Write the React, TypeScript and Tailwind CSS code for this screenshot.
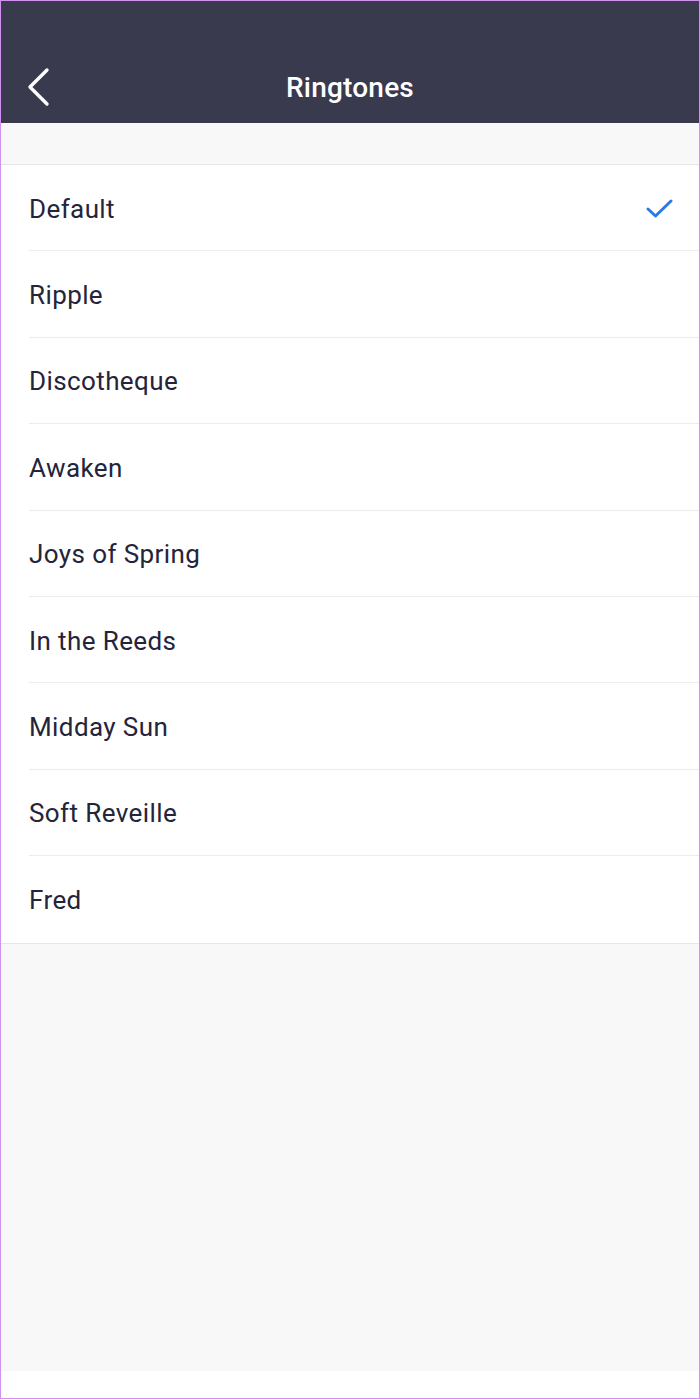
import React from "react";

const items = [
  "Default",
  "Ripple",
  "Discotheque",
  "Awaken",
  "Joys of Spring",
  "In the Reeds",
  "Midday Sun",
  "Soft Reveille",
  "Fred",
];

export default function App() {
  return (
    <div
      className="w-[700px] h-[1399px] flex flex-col bg-white border border-[#d291f0] overflow-hidden"
      style={{ fontFamily: "Roboto, 'Noto Sans', sans-serif" }}
    >
      <header className="relative h-[122px] shrink-0 bg-[#3a3a4f] flex items-end justify-center pb-[21px]">
        <svg
          className="absolute left-[23px] top-[64px]"
          width="32"
          height="44"
          viewBox="0 0 32 44"
          fill="none"
        >
          <path
            d="M23 5 L6 22 L23 39"
            stroke="white"
            strokeWidth="3.4"
            strokeLinecap="round"
            strokeLinejoin="round"
          />
        </svg>
        <h1 className="text-white text-[28px] font-medium leading-none tracking-[0.2px]">
          Ringtones
        </h1>
      </header>
      <div className="h-[42px] shrink-0 bg-[#f8f8f8] border-b border-[#e6e6ea]" />
      <ul className="bg-white border-b border-[#e6e6ea]">
        {items.map((name, i) => (
          <li key={name} className="pl-[28px]">
            <div
              className={`h-[86.4px] flex items-center justify-between pr-[25px] ${
                i < items.length - 1 ? "border-b border-[#ececf0]" : ""
              }`}
            >
              <span className="text-[26px] text-[#24243a] leading-none tracking-[0.4px] pt-[2px]">
                {name}
              </span>
              {i === 0 && (
                <svg className="mt-[2px]" width="28" height="22" viewBox="0 0 28 22" fill="none">
                  <path
                    d="M2 11 L9.5 18 L25 3"
                    stroke="#2a7be4"
                    strokeWidth="3"
                    strokeLinecap="round"
                    strokeLinejoin="round"
                  />
                </svg>
              )}
            </div>
          </li>
        ))}
      </ul>
      <div className="h-[427px] shrink-0 bg-[#f8f8f8]" />
      <div className="flex-1 bg-white" />
    </div>
  );
}
